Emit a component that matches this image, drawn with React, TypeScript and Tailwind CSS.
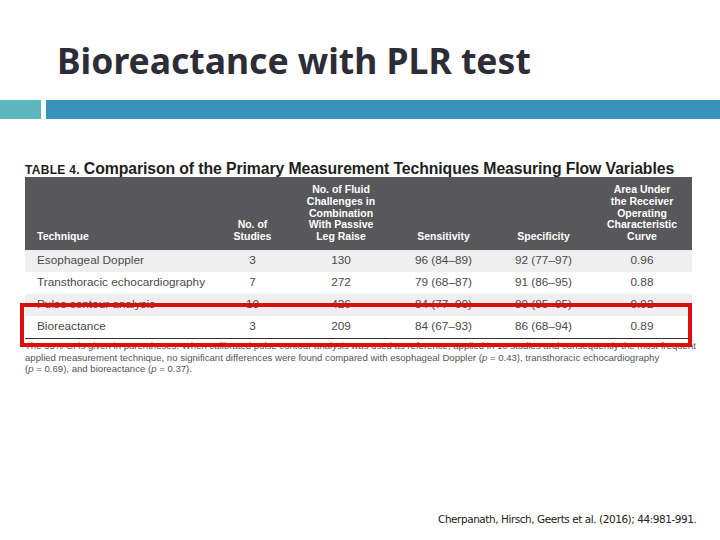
const rows = [
  { tech: "Esophageal Doppler", n: "3", fc: "130", sens: "96 (84–89)", spec: "92 (77–97)", auc: "0.96" },
  { tech: "Transthoracic echocardiography", n: "7", fc: "272", sens: "79 (68–87)", spec: "91 (86–95)", auc: "0.88" },
  { tech: "Pulse contour analysis", n: "10", fc: "426", sens: "84 (77–90)", spec: "89 (85–95)", auc: "0.92" },
  { tech: "Bioreactance", n: "3", fc: "209", sens: "84 (67–93)", spec: "86 (68–94)", auc: "0.89" },
];

const cols = "grid grid-cols-[190px_75px_102px_103px_97px_100px]";

export default function App() {
  return (
    <div className="w-[720px] h-[540px] bg-white flex flex-col overflow-hidden font-['Liberation_Sans',Arial,sans-serif]">
      {/* title */}
      <div className="pt-[39px] pl-[57px] h-[100px]">
        <h1 className="text-[35.5px] leading-[42px] font-bold text-[#2d2d38] font-['Noto_Sans',sans-serif]">
          Bioreactance with PLR test
        </h1>
      </div>

      <div className="flex gap-[5px] h-[19px]">
        <div className="w-[41px] bg-[#5cb6bf]" />
        <div className="flex-1 bg-[#3793b9]" />
      </div>

      {/* table figure */}
      <div className="relative ml-[25px] mt-[38px] w-[667px]">
        <div className="flex items-baseline gap-[4px] h-[20px] text-[#1e1e1e] font-bold">
          <span className="text-[12px] tracking-[0.3px]">TABLE 4.</span>
          <span className="text-[15.8px] tracking-[-0.1px]">Comparison of the Primary Measurement Techniques Measuring Flow Variables</span>
        </div>

        <div className={`${cols} bg-[#58585a] text-white font-bold text-[10.5px] leading-[11.8px] h-[73px] items-end pb-[7px]`}>
          <div className="pl-[12px]">Technique</div>
          <div className="text-center">No. of<br />Studies</div>
          <div className="text-center">No. of Fluid<br />Challenges in<br />Combination<br />With Passive<br />Leg Raise</div>
          <div className="text-center">Sensitivity</div>
          <div className="text-center">Specificity</div>
          <div className="text-center">Area Under<br />the Receiver<br />Operating<br />Characteristic<br />Curve</div>
        </div>

        <div className="text-[11.8px] text-[#4a4a4a]">
          {rows.map((r, i) => (
            <div key={r.tech} className={`${cols} h-[22px] items-center ${i % 2 === 0 ? "bg-[#efefef]" : "bg-white"}`}>
              <div className="pl-[12px]">{r.tech}</div>
              <div className="text-center">{r.n}</div>
              <div className="text-center">{r.fc}</div>
              <div className="text-center">{r.sens}</div>
              <div className="text-center">{r.spec}</div>
              <div className="text-center">{r.auc}</div>
            </div>
          ))}
        </div>
        <div className="h-px bg-[#333]" />

        <p className="mt-[1px] text-[9.6px] leading-[11.6px] text-[#555] whitespace-nowrap">
          The 95% CI is given in parentheses. When calibrated pulse contour analysis was used as reference, applied in 10 studies and consequently the most frequent
          <br />
          applied measurement technique, no significant differences were found compared with esophageal Doppler (<i>p</i> = 0.43), transthoracic echocardiography
          <br />
          (<i>p</i> = 0.69), and bioreactance (<i>p</i> = 0.37).
        </p>

        {/* highlight box */}
        <div className="absolute left-[-5px] top-[146px] w-[672px] h-[44px] border-[4px] border-[#e00b0b]" />
      </div>

      <div className="mt-auto mb-[12px] pl-[438px] text-[10.5px] text-[#222] font-['DejaVu_Sans',sans-serif] tracking-[-0.45px]">
        Cherpanath, Hirsch, Geerts et al. (2016); 44:981-991.
      </div>
    </div>
  );
}
